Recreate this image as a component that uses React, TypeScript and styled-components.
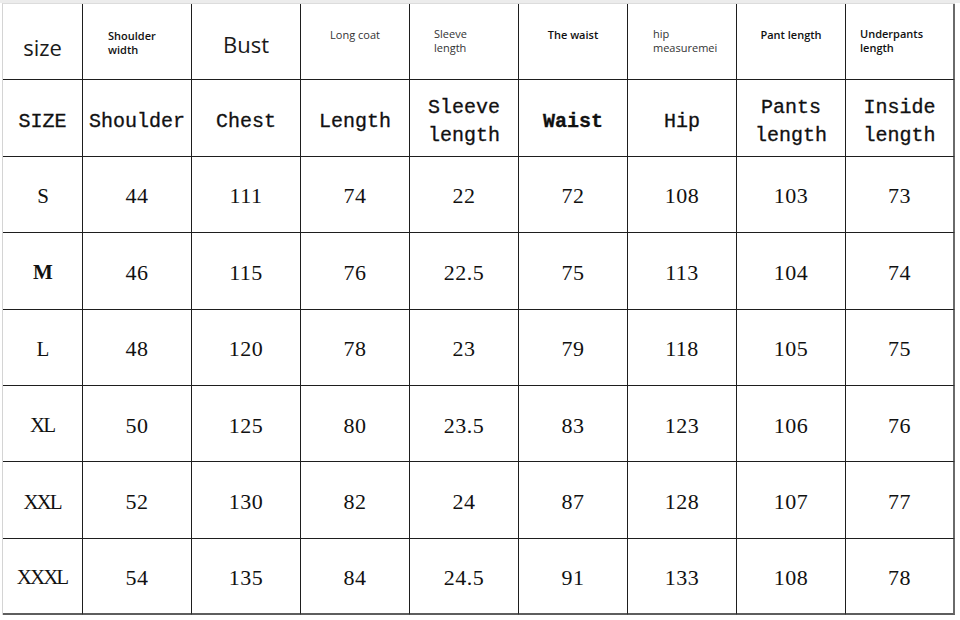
import React from 'react';
import styled, { createGlobalStyle } from 'styled-components';

const GlobalStyle = createGlobalStyle`
    html, body {
        margin: 0;
        padding: 0;
        background: #fff;
    }
`;

const Page = styled.div`
    width: 960px;
    height: 620px;
    box-sizing: border-box;
    border-top: 3px solid #ececec;
    padding-left: 2px;
    background: #fff;
    overflow: hidden;
`;

const Table = styled.div`
    display: grid;
    grid-template-columns: 80px repeat(8, 109px);
    grid-template-rows: repeat(8, 76.4px);
    border-left: 1px solid #d4d4d4;
    border-top: 1px solid #dcdcdc;
    width: max-content;
`;

// one table cell; $pad nudges content down, $left/$top pin small labels to the top-left
const Cell = styled.div<{
    $lastCol?: boolean;
    $lastRow?: boolean;
    $pad?: number;
    $left?: number;
    $top?: number;
}>`
    box-sizing: border-box;
    border-right: ${p => (p.$lastCol ? '2px solid #6a6a6a' : '1px solid #1e1e1e')};
    border-bottom: ${p => (p.$lastRow ? '2px solid #5e5e5e' : '1px solid #1e1e1e')};
    display: flex;
    justify-content: ${p => (p.$left !== undefined ? 'flex-start' : 'center')};
    align-items: ${p => (p.$top !== undefined ? 'flex-start' : 'center')};
    padding-left: ${p => p.$left ?? 0}px;
    padding-top: ${p => p.$top ?? p.$pad ?? 0}px;
    overflow: hidden;
    color: #111;
`;

const BigLabel = styled.span`
    font-family: "Open Sans", "Noto Sans", sans-serif;
    font-size: 22px;
    color: #1a1a1a;
`;

const SmallLabel = styled.span<{ $light?: boolean }>`
    font-family: "Open Sans", "Noto Sans", sans-serif;
    font-size: 11px;
    line-height: 14px;
    font-weight: ${p => (p.$light ? 400 : 600)};
    color: ${p => (p.$light ? '#333' : '#111')};
    white-space: pre;
`;

const MonoLabel = styled.span<{ $bold?: boolean }>`
    font-family: "Liberation Mono", "DejaVu Sans Mono", monospace;
    font-size: 20px;
    line-height: 28px;
    font-weight: ${p => (p.$bold ? 700 : 400)};
    text-align: center;
    white-space: pre;
    -webkit-text-stroke: 0.3px #111;
`;

const SizeName = styled.span<{ $bold?: boolean }>`
    font-family: "Liberation Serif", "DejaVu Serif", serif;
    font-size: 21px;
    font-weight: ${p => (p.$bold ? 700 : 400)};
    letter-spacing: -2px;
    margin-right: 1px;
`;

const Value = styled.span`
    font-family: "Liberation Serif", "DejaVu Serif", serif;
    font-size: 22px;
    letter-spacing: 0.5px;
`;

type Top = { text: string; big?: boolean; left?: number; top?: number; light?: boolean; pad?: number };

const topRow: Top[] = [
    { text: 'size', big: true, pad: 10 },
    { text: 'Shoulder\nwidth', left: 25, top: 25 },
    { text: 'Bust', big: true, pad: 4 },
    { text: 'Long coat', top: 24, light: true },
    { text: 'Sleeve\nlength', left: 24, top: 23, light: true },
    { text: 'The waist', top: 24 },
    { text: 'hip\nmeasuremei', left: 25, top: 23, light: true },
    { text: 'Pant length', top: 24 },
    { text: 'Underpants\nlength', left: 14, top: 23 },
];

const secondRow: { text: string; bold?: boolean }[] = [
    { text: 'SIZE' },
    { text: 'Shoulder' },
    { text: 'Chest' },
    { text: 'Length' },
    { text: 'Sleeve\nlength' },
    { text: 'Waist', bold: true },
    { text: 'Hip' },
    { text: 'Pants\nlength' },
    { text: 'Inside\nlength' },
];

const rows: string[][] = [
    ['S', '44', '111', '74', '22', '72', '108', '103', '73'],
    ['M', '46', '115', '76', '22.5', '75', '113', '104', '74'],
    ['L', '48', '120', '78', '23', '79', '118', '105', '75'],
    ['XL', '50', '125', '80', '23.5', '83', '123', '106', '76'],
    ['XXL', '52', '130', '82', '24', '87', '128', '107', '77'],
    ['XXXL', '54', '135', '84', '24.5', '91', '133', '108', '78'],
];

export default function App() {
    return (
        <>
            <GlobalStyle />
            <Page>
                <Table>
                    {topRow.map((c, i) => (
                        <Cell
                            key={'t' + i}
                            $lastCol={i === 8}
                            $left={c.left}
                            $top={c.big ? undefined : c.top}
                            $pad={c.pad}
                        >
                            {c.big
                                ? <BigLabel>{c.text}</BigLabel>
                                : <SmallLabel $light={c.light}>{c.text}</SmallLabel>}
                        </Cell>
                    ))}
                    {secondRow.map((c, i) => (
                        <Cell key={'h' + i} $lastCol={i === 8} $pad={8}>
                            <MonoLabel $bold={c.bold}>{c.text}</MonoLabel>
                        </Cell>
                    ))}
                    {rows.map((r, ri) =>
                        r.map((v, ci) => (
                            <Cell
                                key={ri + '-' + ci}
                                $lastCol={ci === 8}
                                $lastRow={ri === rows.length - 1}
                                $pad={4}
                            >
                                {ci === 0 ? <SizeName $bold={v === 'M'}>{v}</SizeName> : <Value>{v}</Value>}
                            </Cell>
                        ))
                    )}
                </Table>
            </Page>
        </>
    );
}
